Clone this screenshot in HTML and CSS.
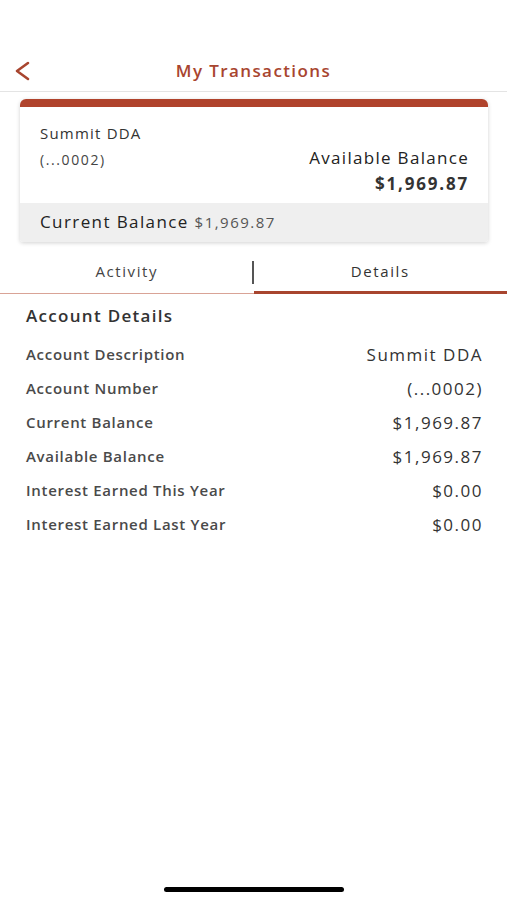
FILE: index.html
```html
<!DOCTYPE html>
<html lang="en">
<head>
    <meta charset="UTF-8">
    <meta name="viewport" content="width=device-width, initial-scale=1.0">
    <title>My Transactions</title>
    <link rel="stylesheet" href="styles.css">
</head>
<body>
    <div class="screen">
        <div class="nav-bar">
            <button class="back-btn" aria-label="Back">
                <svg width="16" height="20" viewBox="0 0 16 20">
                    <path d="M14 2 L3 10 L14 18" fill="none" stroke="#a8452f" stroke-width="2.6" stroke-linecap="round" stroke-linejoin="round"/>
                </svg>
            </button>
            <h1>My Transactions</h1>
        </div>

        <div class="account-card">
            <div class="card-top">
                <div class="card-name">Summit DDA</div>
                <div class="card-row">
                    <span class="card-number">(...0002)</span>
                    <span class="avail-label">Available Balance</span>
                </div>
                <div class="avail-amount">$1,969.87</div>
            </div>
            <div class="card-bottom">
                Current Balance <span class="current-amount">$1,969.87</span>
            </div>
        </div>

        <div class="tabs">
            <div class="tab">Activity</div>
            <div class="tab active">Details</div>
        </div>

        <div class="details">
            <h2>Account Details</h2>
            <div class="detail-row">
                <span class="detail-label">Account Description</span>
                <span class="detail-value">Summit DDA</span>
            </div>
            <div class="detail-row">
                <span class="detail-label">Account Number</span>
                <span class="detail-value">(...0002)</span>
            </div>
            <div class="detail-row">
                <span class="detail-label">Current Balance</span>
                <span class="detail-value">$1,969.87</span>
            </div>
            <div class="detail-row">
                <span class="detail-label">Available Balance</span>
                <span class="detail-value">$1,969.87</span>
            </div>
            <div class="detail-row">
                <span class="detail-label">Interest Earned This Year</span>
                <span class="detail-value">$0.00</span>
            </div>
            <div class="detail-row">
                <span class="detail-label">Interest Earned Last Year</span>
                <span class="detail-value">$0.00</span>
            </div>
        </div>

        <div class="home-indicator"></div>
    </div>
</body>
</html>
```

FILE: styles.css
```css
body {
    font-family: 'Open Sans', 'Liberation Sans', sans-serif;
    background-color: #fff;
    margin: 0;
    color: #222;
}
.screen {
    width: 507px;
    height: 900px;
    display: flex;
    flex-direction: column;
    position: relative;
}
.nav-bar {
    height: 92px;
    border-bottom: 1px solid #e4e4e4;
    display: flex;
    align-items: center;
    justify-content: center;
    padding-top: 50px;
    box-sizing: border-box;
    position: relative;
}
.nav-bar h1 {
    margin: 0;
    font-size: 17px;
    font-weight: 600;
    color: #a8452f;
    letter-spacing: 1.4px;
}
.back-btn {
    position: absolute;
    left: 14px;
    top: 61px;
    border: none;
    background: none;
    padding: 0;
    width: 16px;
    height: 20px;
}
.account-card {
    margin: 7px 19px 0 20px;
    border-top: 8px solid #b0432c;
    border-radius: 6px 6px 3px 3px;
    box-shadow: 0 1px 4px rgba(0, 0, 0, 0.18);
    overflow: hidden;
}
.card-top {
    padding: 16px 19px 8px 20px;
    background-color: #fff;
}
.card-name {
    font-size: 15px;
    color: #333;
    letter-spacing: 1.2px;
}
.card-row {
    display: flex;
    justify-content: space-between;
    align-items: flex-end;
    margin-top: 3px;
}
.card-number {
    font-size: 14px;
    color: #444;
    letter-spacing: 1.6px;
}
.avail-label {
    font-size: 17px;
    color: #222;
    letter-spacing: 1.3px;
}
.avail-amount {
    text-align: right;
    font-size: 17px;
    font-weight: 700;
    color: #333;
    margin-top: 3px;
    letter-spacing: 1.8px;
}
.card-bottom {
    background-color: #efefef;
    padding: 7px 20px 9px 20px;
    font-size: 17px;
    color: #222;
    letter-spacing: 1.4px;
}
.current-amount {
    font-size: 15px;
    color: #555;
    letter-spacing: 1.5px;
}
.tabs {
    display: flex;
    margin-top: 18px;
    border-bottom: 1px solid #d9a396;
    position: relative;
}
.tab {
    flex: 1;
    text-align: center;
    font-size: 15px;
    color: #444;
    height: 33px;
    line-height: 22px;
    position: relative;
    letter-spacing: 1.6px;
}
.tab:first-child::after {
    content: "";
    position: absolute;
    right: 0;
    top: 1px;
    width: 2px;
    height: 23px;
    background-color: #555;
}
.tab.active {
    color: #333;
}
.tab.active::before {
    content: "";
    position: absolute;
    left: 0;
    right: 0;
    bottom: -1px;
    height: 3px;
    background-color: #a8452f;
}
.details {
    padding: 10px 24px 0 26px;
}
.details h2 {
    margin: 0 0 10px 0;
    font-size: 17px;
    font-weight: 600;
    color: #333;
    letter-spacing: 1.3px;
}
.detail-row {
    display: flex;
    justify-content: space-between;
    align-items: center;
    height: 34px;
}
.detail-label {
    font-size: 15px;
    font-weight: 600;
    color: #4a4a4a;
    letter-spacing: 0.7px;
}
.detail-value {
    font-size: 17px;
    color: #333;
    letter-spacing: 1.5px;
}
.home-indicator {
    position: absolute;
    left: 164px;
    bottom: 8px;
    width: 180px;
    height: 5px;
    border-radius: 3px;
    background-color: #000;
}
```
